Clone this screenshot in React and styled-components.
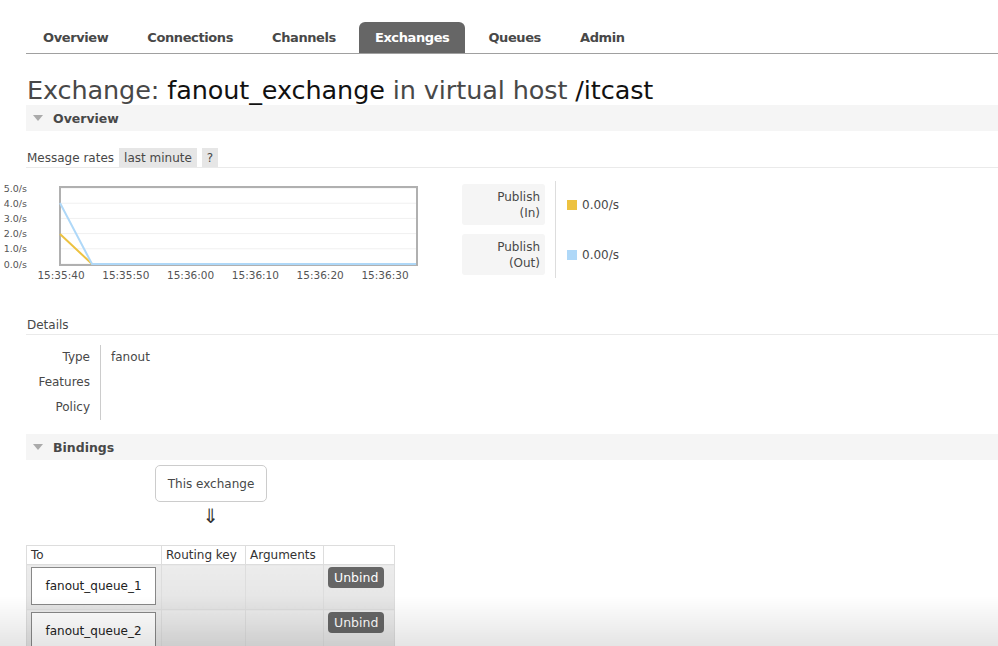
import React from "react";
import styled, { createGlobalStyle } from "styled-components";

const Global = createGlobalStyle`
  html, body { margin: 0; padding: 0; background: #fff; }
  body { font-family: "DejaVu Sans", Verdana, sans-serif; color: #484848; font-size: 12px; }
`;

const Page = styled.div`
  width: 998px;
  padding: 22px 0 0 26px;
  box-sizing: border-box;
`;

const Nav = styled.ul`
  display: flex;
  list-style: none;
  margin: 0;
  padding: 0 0 0 1px;
  border-bottom: 1px solid #a0a0a0;
  height: 31px;
`;

const Tab = styled.li`
  height: 31px;
  padding: 0 16px;
  margin-right: 7px;
  display: flex;
  align-items: center;
  font-weight: bold;
  font-size: 13px;
  letter-spacing: -0.4px;
  color: ${(p) => (p.$active ? "#fff" : "#484848")};
  background: ${(p) => (p.$active ? "#666" : "transparent")};
  border-radius: 6px 6px 0 0;
`;

const Title = styled.h1`
  margin: 21px 0 0 1px;
  font-weight: normal;
  font-size: 25.5px;
  line-height: 30px;
  color: #484848;
  letter-spacing: -0.1px;
`;

const Strong = styled.span`
  color: #111;
`;

const SectionBar = styled.div`
  height: 26px;
  background: #f5f5f5;
  display: flex;
  align-items: center;
  padding-left: 7px;
  margin-top: ${(p) => p.$mt || 0}px;
  font-weight: bold;
  font-size: 12.5px;
  color: #484848;
`;

const Triangle = styled.span`
  width: 0;
  height: 0;
  border-left: 5px solid transparent;
  border-right: 5px solid transparent;
  border-top: 6px solid #aaa;
  margin-right: 10px;
`;

const SubHead = styled.div`
  display: flex;
  align-items: center;
  gap: 5px;
  margin-top: ${(p) => p.$mt || 0}px;
  padding-left: 1px;
  height: 19px;
  border-bottom: 1px solid #eaeaea;
  font-size: 12px;
  color: #484848;
`;

const Pill = styled.span`
  background: #e6e6e6;
  height: 19px;
  display: inline-flex;
  align-items: center;
  padding: 0 5px;
  font-size: 12px;
  color: #484848;
`;

const RatesRow = styled.div`
  display: flex;
  align-items: flex-start;
  margin-top: 13px;
`;

const ChartSvg = styled.svg`
  display: block;
  margin-left: -26px;
  flex: none;
`;

const Stats = styled.div`
  display: flex;
  margin-left: 32px;
`;

const StatLabels = styled.div`
  display: flex;
  flex-direction: column;
  gap: 9px;
  padding: 3px 10px 3px 0;
  border-right: 1px solid #ddd;
`;

const StatLabel = styled.div`
  width: 78px;
  height: 41px;
  padding-right: 5px;
  background: #f5f5f5;
  border-radius: 3px;
  display: flex;
  flex-direction: column;
  justify-content: center;
  align-items: flex-end;
  text-align: right;
  line-height: 16px;
  font-size: 12px;
  color: #484848;
`;

const StatValues = styled.div`
  display: flex;
  flex-direction: column;
  gap: 9px;
  padding: 3px 0 3px 11px;
`;

const StatValue = styled.div`
  height: 41px;
  display: flex;
  align-items: center;
  gap: 5px;
  font-size: 12px;
  color: #484848;
`;

const Swatch = styled.span`
  width: 10px;
  height: 10px;
  background: ${(p) => p.$color};
`;

const DetailGrid = styled.div`
  display: grid;
  grid-template-columns: 75px auto;
  margin-top: 10px;
`;

const DetailLabel = styled.div`
  text-align: right;
  padding-right: 10px;
  border-right: 1px solid #ccc;
  height: 25px;
  line-height: 25px;
  font-size: 12px;
  color: #484848;
`;

const DetailValue = styled.div`
  padding-left: 10px;
  height: 25px;
  line-height: 25px;
  font-size: 12px;
  color: #484848;
`;

const ExchangeBox = styled.div`
  margin: 5px 0 0 129px;
  width: 110px;
  height: 35px;
  border: 1px solid #ccc;
  border-radius: 5px;
  display: flex;
  align-items: center;
  justify-content: center;
  font-size: 12px;
  color: #484848;
`;

const Arrow = styled.div`
  width: 112px;
  height: 26px;
  margin-left: 129px;
  text-align: center;
  font-size: 20px;
  line-height: 28px;
  color: #333;
`;

const Table = styled.table`
  border-collapse: collapse;
  margin-top: 17px;
  font-size: 12px;
  color: #333;
`;

const Th = styled.th`
  font-weight: normal;
  text-align: left;
  padding: 0 4px;
  height: 19px;
  border: 1px solid #ddd;
  background: #fff;
  width: ${(p) => p.$w}px;
  box-sizing: border-box;
`;

const Td = styled.td`
  border: 1px solid #ddd;
  background: linear-gradient(#ececec, #e4e4e4);
  height: 40px;
  vertical-align: top;
  padding: 2px 4px;
`;

const QueueBox = styled.div`
  width: 123px;
  height: 36px;
  background: #fff;
  border: 1px solid #888;
  display: flex;
  align-items: center;
  justify-content: center;
  font-size: 12px;
  color: #222;
`;

const UnbindBtn = styled.button`
  margin: 0;
  background: #666;
  color: #fff;
  border: none;
  border-radius: 4px;
  font-family: "DejaVu Sans", Verdana, sans-serif;
  font-size: 12.5px;
  height: 21px;
  padding: 0 6px;
`;

const BottomShade = styled.div`
  position: fixed;
  left: 0;
  right: 0;
  bottom: 0;
  height: 50px;
  background: linear-gradient(rgba(0,0,0,0), rgba(0,0,0,0.1));
  pointer-events: none;
`;

function Chart() {
  const yVals = [5, 4, 3, 2, 1, 0];
  const yOf = (v) => 83 - v * 15.2;
  const xLabels = ["15:35:40", "15:35:50", "15:36:00", "15:36:10", "15:36:20", "15:36:30"];
  return (
    <ChartSvg width="430" height="104" viewBox="0 0 430 104">
      {yVals.map((v) => (
        <line key={v} x1="60" x2="416" y1={yOf(v)} y2={yOf(v)} stroke="#f0f0f0" strokeWidth="1" />
      ))}
      <rect x="60" y="6" width="357" height="78" fill="none" stroke="#b0b0b0" strokeWidth="2" />
      {yVals.map((v) => (
        <text key={v} x="27" y={yOf(v) + 3.5} textAnchor="end" fontSize="9.5" fill="#545454" fontFamily="DejaVu Sans, sans-serif">
          {v.toFixed(1)}/s
        </text>
      ))}
      {xLabels.map((l, i) => (
        <text key={l} x={61 + i * 64.8} y="98" textAnchor="middle" fontSize="10.5" fill="#545454" fontFamily="DejaVu Sans, sans-serif">
          {l}
        </text>
      ))}
      <polyline points="60,53 92,83 416,83" fill="none" stroke="#edc240" strokeWidth="2" />
      <polyline points="60,22 92,83 416,83" fill="none" stroke="#afd8f8" strokeWidth="2" />
    </ChartSvg>
  );
}

export default function App() {
  const tabs = ["Overview", "Connections", "Channels", "Exchanges", "Queues", "Admin"];
  return (
    <>
      <Global />
      <Page>
        <Nav>
          {tabs.map((t) => (
            <Tab key={t} $active={t === "Exchanges"}>{t}</Tab>
          ))}
        </Nav>
        <Title>
          Exchange: <Strong>fanout_exchange</Strong> in virtual host <Strong>/itcast</Strong>
        </Title>
        <SectionBar>
          <Triangle />
          Overview
        </SectionBar>
        <SubHead $mt={17}>
          Message rates <Pill>last minute</Pill> <Pill>?</Pill>
        </SubHead>
        <RatesRow>
          <Chart />
          <Stats>
            <StatLabels>
              <StatLabel>
                <span>Publish</span>
                <span>(In)</span>
              </StatLabel>
              <StatLabel>
                <span>Publish</span>
                <span>(Out)</span>
              </StatLabel>
            </StatLabels>
            <StatValues>
              <StatValue>
                <Swatch $color="#edc240" />
                0.00/s
              </StatValue>
              <StatValue>
                <Swatch $color="#afd8f8" />
                0.00/s
              </StatValue>
            </StatValues>
          </Stats>
        </RatesRow>
        <SubHead $mt={30}>Details</SubHead>
        <DetailGrid>
          <DetailLabel>Type</DetailLabel>
          <DetailValue>fanout</DetailValue>
          <DetailLabel>Features</DetailLabel>
          <DetailValue />
          <DetailLabel>Policy</DetailLabel>
          <DetailValue />
        </DetailGrid>
        <SectionBar $mt={14}>
          <Triangle />
          Bindings
        </SectionBar>
        <ExchangeBox>This exchange</ExchangeBox>
        <Arrow>⇓</Arrow>
        <Table>
          <thead>
            <tr>
              <Th $w={135}>To</Th>
              <Th $w={84}>Routing key</Th>
              <Th $w={78}>Arguments</Th>
              <Th $w={71}></Th>
            </tr>
          </thead>
          <tbody>
            {["fanout_queue_1", "fanout_queue_2"].map((q) => (
              <tr key={q}>
                <Td>
                  <QueueBox>{q}</QueueBox>
                </Td>
                <Td />
                <Td />
                <Td>
                  <UnbindBtn>Unbind</UnbindBtn>
                </Td>
              </tr>
            ))}
          </tbody>
        </Table>
      </Page>
      <BottomShade />
    </>
  );
}
